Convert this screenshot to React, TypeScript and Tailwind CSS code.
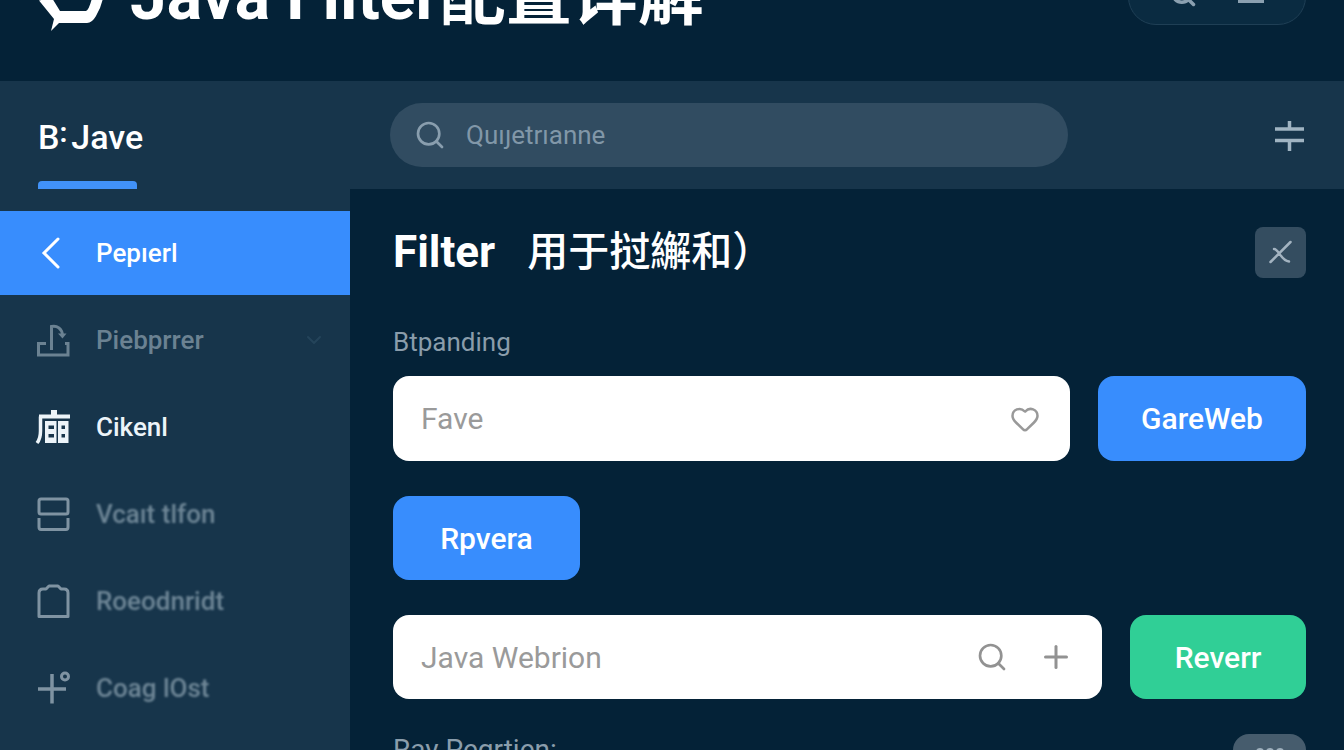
import type { ReactNode } from 'react';
import { ChevronDown, Heart, Plus, Search } from 'lucide-react';

interface MenuItem {
  label: string;
  icon: ReactNode;
  className: string;
  labelClass?: string;
  expandable?: boolean;
}

function BackIcon() {
  return (
    <svg className="w-9 h-9" viewBox="0 0 36 36" fill="none" stroke="currentColor" strokeWidth={3}>
      <path d="M24 4L10 18L24 32" strokeLinecap="round" />
    </svg>
  );
}

function DockIcon() {
  return (
    <svg className="w-9 h-9" viewBox="0 0 36 36" fill="none" stroke="currentColor" strokeWidth={3}>
      <path d="M12 21.500H4.500V33H34V21.500H31" />
      <path d="M17.500 28V4.500C23 3 28 7 28.500 13" />
      <path d="M24 11.500l4.500 5 4-5" fill="currentColor" stroke="none" />
    </svg>
  );
}

function ShopIcon() {
  return (
    <svg className="w-9 h-9" viewBox="0 0 36 36" fill="none" stroke="currentColor" strokeWidth={3}>
      <path d="M20 1V7" strokeWidth={6} />
      <path d="M5 7.500H36" strokeWidth={4} />
      <path d="M6.500 7.500V22C6.500 28 5.500 31 3 34" strokeWidth={3.500} />
      <path
        d="M11 12H22.500V34H11ZM14.500 16.500V20H20V16.500ZM14.500 25V28.500H20V25ZM24 12H34.500V34H24ZM27.500 16.500V20H31V16.500ZM27.500 25V28.500H31V25Z"
        fill="currentColor"
        fillRule="evenodd"
        stroke="none"
      />
    </svg>
  );
}

function RowsIcon() {
  return (
    <svg className="w-9 h-9" viewBox="0 0 36 36" fill="none" stroke="currentColor" strokeWidth={3}>
      <rect x="5" y="3" width="29" height="15" rx="2" />
      <path d="M5 22V31Q5 33.500 7 33.500H32Q34 33.500 34 31V22" />
    </svg>
  );
}

function BagIcon() {
  return (
    <svg className="w-9 h-9" viewBox="0 0 36 36" fill="none" stroke="currentColor" strokeWidth={3}>
      <path d="M5 33.500V10Q5 6 9 6H12L15 3H24L27 6H30Q34 6 34 10V33.500Z" strokeLinejoin="round" />
    </svg>
  );
}

function PlusDotIcon() {
  return (
    <svg className="w-9 h-9" viewBox="0 0 36 36" fill="none" stroke="currentColor" strokeWidth={3.500}>
      <path d="M4 19H32M18 4V33.500" />
      <circle cx="31" cy="6.500" r="3.500" strokeWidth={3} />
    </svg>
  );
}

const MENU: MenuItem[] = [
  { label: 'Pepıerl', icon: <BackIcon />, className: 'bg-[#388dfd] text-white' },
  { label: 'Piebprrer', icon: <DockIcon />, className: 'text-[#6b8292]', expandable: true },
  { label: 'Cikenl', icon: <ShopIcon />, className: 'text-[#ecf4f9]' },
  { label: 'Vcaıt tlfon', icon: <RowsIcon />, className: 'text-[#7f93a2]', labelClass: 'blur-[1px] text-[#6f8797]' },
  { label: 'Roeodnridt', icon: <BagIcon />, className: 'text-[#7f93a2]', labelClass: 'blur-[1px] text-[#6f8797]' },
  { label: 'Coag lOst', icon: <PlusDotIcon />, className: 'text-[#7f93a2]', labelClass: 'blur-[1px] text-[#6f8797]' },
];

function Header() {
  return (
    <header className="h-[81px] shrink-0 overflow-hidden">
      <div className="-mt-12 flex items-start justify-between pl-9 pr-[38px]">
        <div className="flex items-start gap-6">
          <svg className="w-[70px] h-20 text-white" viewBox="0 0 70 80" fill="currentColor">
            <path d="M3 48.500L16 46L24 59H50Q53 58 56 46H67Q65 56 60 64Q56 71 51 71H23L15 79L18 67Z" />
          </svg>
          <h1 className="text-[66px] leading-[90px] font-bold text-white">Java Filter配置详解</h1>
        </div>
        <div className="flex h-[73px] w-[178px] items-end justify-between rounded-[28px] border border-[#1f3f55] bg-[#0a2b41] px-10 pb-4 text-[#8ba0b0]">
          <button type="button" aria-label="Search">
            <Search className="w-7 h-7" strokeWidth={3} />
          </button>
          <button type="button" aria-label="Menu">
            <svg className="w-7 h-7" viewBox="0 0 28 28" stroke="currentColor" strokeWidth={4}>
              <path d="M1 1H27M1 11H27M1 21H27" />
            </svg>
          </button>
        </div>
      </div>
    </header>
  );
}

function Toolbar() {
  return (
    <div className="flex h-[108px] shrink-0 items-stretch bg-[#17354b]">
      <div className="flex w-[390px] shrink-0 flex-col justify-between pl-[38px]">
        <a href="#java" className="flex gap-1 pt-9 text-[34px] leading-10 font-medium text-white">
          <span className="flex">B<span className="text-[28px] leading-8 font-bold">:</span></span>
          Jave
        </a>
        <span className="h-2 w-[99px] rounded-t bg-[#4192f8]" />
      </div>
      <label className="my-[22px] flex flex-1 items-center gap-5 rounded-full bg-[#314c61] px-6 text-[#899eae]">
        <Search className="w-8 h-8 shrink-0" strokeWidth={2} />
        <input
          type="search"
          aria-label="Search"
          placeholder="Quıȷetrıanne"
          className="w-full bg-transparent text-[26px] outline-none placeholder:text-[#8197a8]"
        />
      </label>
      <div className="flex w-[276px] shrink-0 items-center justify-end pr-[38px]">
        <button type="button" aria-label="Adjust" className="text-[#a0b4c2]">
          <svg className="w-8 h-8" viewBox="0 0 32 32" fill="none" stroke="currentColor" strokeWidth={3.500}>
            <path d="M1 10H30M1 21.500H30M15.500 2V10M15.500 21.500V32" />
          </svg>
        </button>
      </div>
    </div>
  );
}

function Sidebar() {
  return (
    <nav className="flex w-[350px] shrink-0 flex-col bg-[#17354b] pt-[22px]">
      {MENU.map((item) => (
        <a
          key={item.label}
          href="#menu"
          className={`flex h-[84px] shrink-0 items-center gap-[26px] pl-[34px] pr-6 mb-[3px] text-[26px] ${item.className}`}
        >
          <span className="flex w-9 shrink-0 justify-center">{item.icon}</span>
          <span className={`flex-1 font-medium ${item.labelClass ?? ''}`}>{item.label}</span>
          {item.expandable && <ChevronDown className="w-6 h-6 text-[#24445a]" />}
        </a>
      ))}
    </nav>
  );
}

export default function App() {
  return (
    <div className="flex h-screen flex-col overflow-hidden bg-[#042237] font-[Roboto,'Noto_Sans_CJK_SC',sans-serif]">
      <Header />
      <Toolbar />
      <div className="flex min-h-0 flex-1">
        <Sidebar />
        <main className="flex-1 overflow-hidden pl-[43px] pr-[38px] pt-[37px]">
          <div className="flex items-center justify-between">
            <h2 className="flex items-center gap-8 text-[44px] leading-[52px] font-bold text-white">
              Filter <span className="text-[41px] font-medium">用于挝繲和）</span>
            </h2>
            <button type="button" aria-label="Close" className="flex size-[51px] items-center justify-center rounded-lg bg-[#344d60] text-[#a3b3c0]">
              <svg className="w-6 h-6" viewBox="0 0 24 24" fill="none" stroke="currentColor" strokeWidth={2.500} strokeLinecap="round">
                <path d="M1.500 22L21.500 2M5 9C10 9 12 21 20 21.500" />
              </svg>
            </button>
          </div>

          <label htmlFor="expanding" className="mt-11 block text-[26px] leading-[40px] text-[#8a9dab]">Btpanding</label>
          <div className="mt-[14px] flex gap-7">
            <div className="flex h-[85px] flex-1 items-center rounded-2xl bg-white pl-7 pr-[30px] text-[#999999]">
              <input id="expanding" placeholder="Fave" className="min-w-0 flex-1 text-[30px] outline-none placeholder:text-[#9a9a9a]" />
              <button type="button" aria-label="Favourite">
                <Heart className="w-[30px] h-[30px]" strokeWidth={2} />
              </button>
            </div>
            <button type="button" className="w-[208px] rounded-2xl bg-[#388dfd] text-[30px] font-medium text-white">GareWeb</button>
          </div>

          <button type="button" className="mt-[35px] block h-[84px] w-[187px] rounded-2xl bg-[#388dfd] text-[30px] font-medium text-white">Rpvera</button>

          <div className="mt-[35px] flex gap-7">
            <div className="flex h-[84px] flex-1 items-center gap-[30px] rounded-2xl bg-white px-7 text-[#929292]">
              <input aria-label="Java Webrion" placeholder="Java Webrion" className="min-w-0 flex-1 text-[30px] outline-none placeholder:text-[#9a9a9a]" />
              <button type="button" aria-label="Search">
                <Search className="w-8 h-8" strokeWidth={2} />
              </button>
              <button type="button" aria-label="Add">
                <Plus className="w-9 h-9" strokeWidth={2} />
              </button>
            </div>
            <button type="button" className="w-[176px] rounded-2xl bg-[#30cf96] text-[30px] font-medium text-white">Reverr</button>
          </div>

          <div className="mt-[35px] flex items-start justify-between">
            <p className="text-[28px] leading-8 text-[#8a9dab]">Ray Pegrtien:</p>
            <button type="button" aria-label="More" className="flex h-9 w-[73px] items-center justify-center rounded-2xl bg-[#465c6d] text-[#9fb0bd]">
              <svg className="w-7 h-2" viewBox="0 0 28 8" fill="currentColor">
                <circle cx="4" cy="4" r="4" />
                <circle cx="14" cy="4" r="4" />
                <circle cx="24" cy="4" r="4" />
              </svg>
            </button>
          </div>
        </main>
      </div>
    </div>
  );
}
